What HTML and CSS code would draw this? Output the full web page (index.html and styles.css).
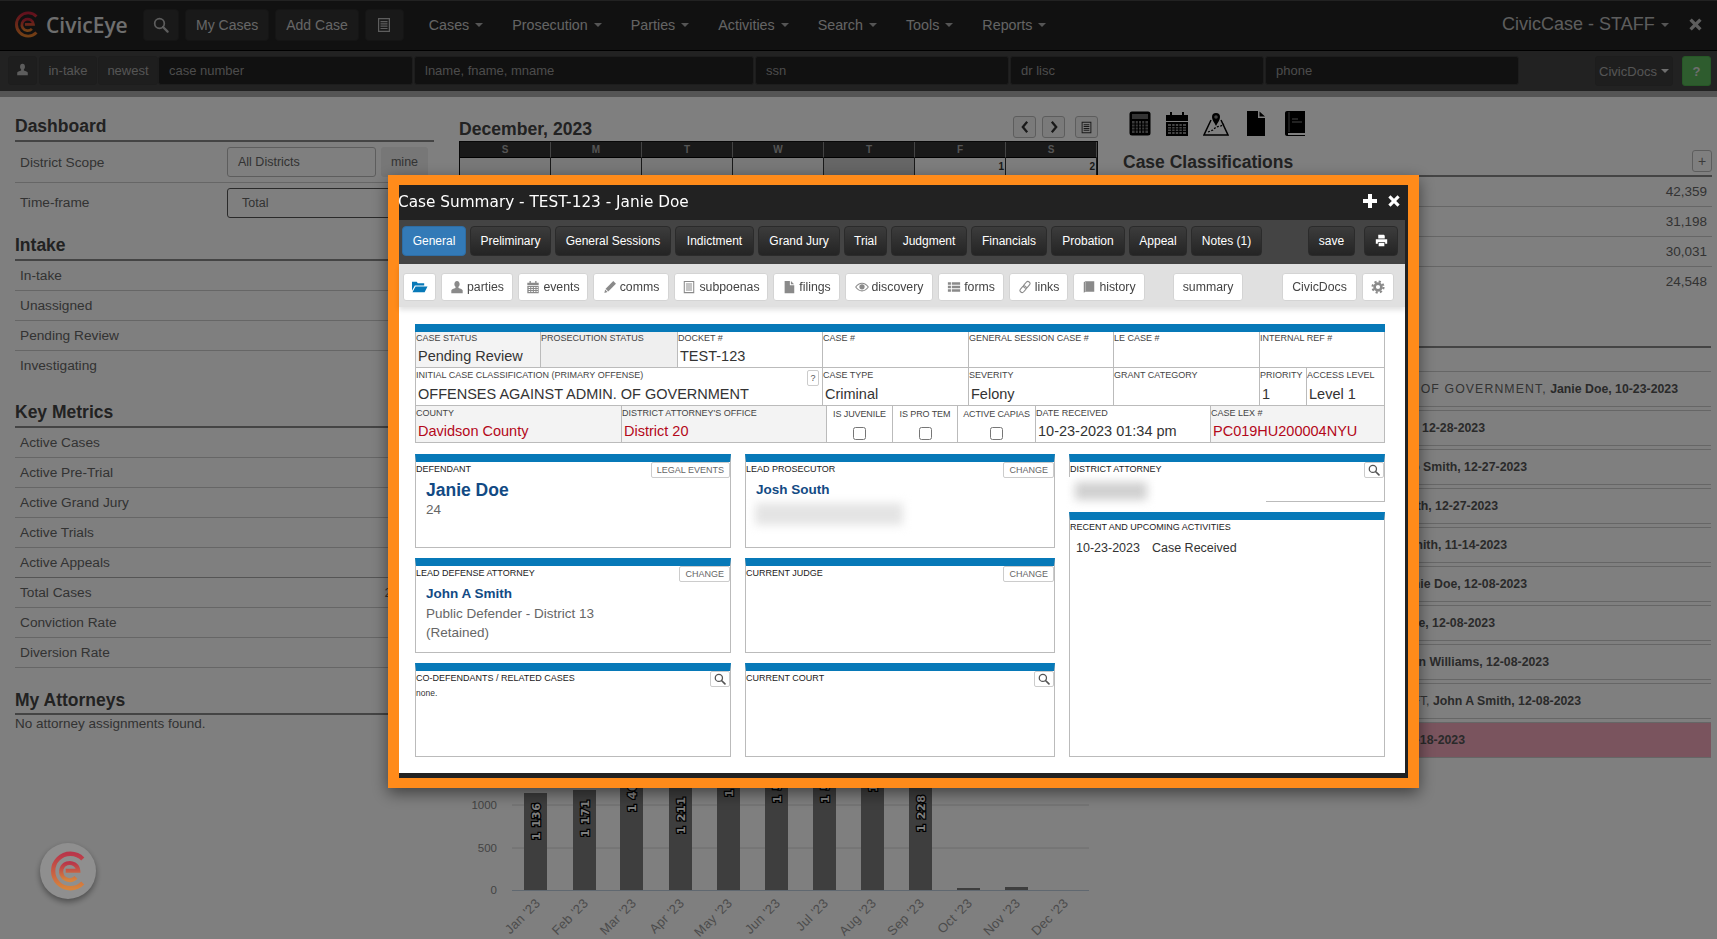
FILE: index.html
```html
<!DOCTYPE html>
<html lang="en">
<head>
<meta charset="utf-8">
<title>CivicEye - Case Summary</title>
<link rel="stylesheet" href="styles.css">
</head>
<body>
<svg class="defs" aria-hidden="true">
  <defs>
    <linearGradient id="brand" x1="0" y1="0" x2="0" y2="1"><stop offset="0" stop-color="#c4203a"/><stop offset="1" stop-color="#e8822a"/></linearGradient>
    <symbol id="i-logo" viewBox="0 0 22 26"><path d="M20.6 5.200A11.200 11.200 0 1 0 20.600 20.800" fill="none" stroke="url(#brand)" stroke-width="2.800"/><path d="M9.500 12.800h8.200A5.600 5.600 0 1 0 16.200 17.200" fill="none" stroke="url(#brand)" stroke-width="2.600"/></symbol>
    <symbol id="i-search" viewBox="0 0 16 16"><circle cx="6.500" cy="6.500" r="4.800" fill="none" stroke="currentColor" stroke-width="1.700"/><path d="M10 10l4.600 4.600" stroke="currentColor" stroke-width="2.200" stroke-linecap="round"/></symbol>
    <symbol id="i-user" viewBox="0 0 16 16"><path fill="currentColor" d="M8 1c2 0 3 1.600 3 3.600 0 1.600-.6 2.600-1.300 3.200v1.300c2 .6 4.800 1.300 4.800 3V15h-13v-2.900c0-1.700 2.800-2.400 4.800-3V7.800C5.600 7.200 5 6.200 5 4.600 5 2.600 6 1 8 1z"/></symbol>
    <symbol id="i-list" viewBox="0 0 16 16"><path fill="currentColor" fill-rule="evenodd" d="M2 1h12v14H2zM3.200 2.200v11.600h9.600V2.200z"/><path fill="currentColor" d="M4.500 4h7v1.200h-7zM4.500 6.300h7v1.200h-7zM4.500 8.600h7v1.200h-7zM4.500 10.900h7v1.200h-7z"/></symbol>
    <symbol id="i-folder" viewBox="0 0 18 16"><path fill="currentColor" d="M1 3h5l1.200 1.500H14V7H4L1 12.500z"/><path fill="currentColor" d="M4.800 8H17.500l-3 6H1.500z"/></symbol>
    <symbol id="i-cal" viewBox="0 0 16 16"><path fill="currentColor" d="M4 1h1.500v2H10.500V1H12v2h2.500v2.800h-13V3H4z"/><path fill="currentColor" fill-rule="evenodd" d="M1.500 6.500h13V15h-13zM3 8v1.200h1.800V8zm3 0v1.200h1.800V8zm3 0v1.200h1.800V8zm3 0v1.200h1.500V8zM3 10.300v1.200h1.800v-1.200zm3 0v1.200h1.800v-1.200zm3 0v1.200h1.800v-1.200zm3 0v1.200h1.500v-1.200zM3 12.600v1.200h1.800v-1.200zm3 0v1.200h1.800v-1.200zm3 0v1.200h1.800v-1.200zm3 0v1.200h1.500v-1.200z"/></symbol>
    <symbol id="i-pencil" viewBox="0 0 16 16"><path fill="currentColor" d="M11.800 1.200l3 3-8.800 8.800-3-3z"/><path fill="currentColor" d="M2.400 10.800l2.800 2.800-3.600 1.200z"/></symbol>
    <symbol id="i-file" viewBox="0 0 16 16"><path fill="currentColor" d="M3 1h6v5h5v9H3zM10.200 1.200l3.600 3.700h-3.600z"/></symbol>
    <symbol id="i-eye" viewBox="0 0 16 16"><path fill="none" stroke="currentColor" stroke-width="1.200" d="M.8 8C3 4.800 5.500 3.600 8 3.600s5 1.200 7.200 4.400c-2.200 3.200-4.700 4.400-7.200 4.400S3 11.200.8 8z"/><circle cx="8" cy="7.800" r="3" fill="currentColor"/></symbol>
    <symbol id="i-th" viewBox="0 0 16 16"><path fill="currentColor" d="M1 2.500h3.500v3H1zM5.500 2.500H15v3H5.500zM1 6.500h3.500v3H1zM5.500 6.500H15v3H5.500zM1 10.500h3.500v3H1zM5.500 10.500H15v3H5.500z"/></symbol>
    <symbol id="i-link" viewBox="0 0 16 16"><g fill="none" stroke="currentColor" stroke-width="1.200" transform="rotate(-50 8 8)"><rect x="0.500" y="5.600" width="8.500" height="4.800" rx="2.400"/><rect x="7" y="5.600" width="8.500" height="4.800" rx="2.400"/></g></symbol>
    <symbol id="i-book" viewBox="0 0 16 16"><path fill="currentColor" d="M2 2.500l2-1h10v12H4l-2 1z"/><path fill="#fff" d="M3.600 2.200h.6V13h-.6z" opacity=".6"/></symbol>
    <symbol id="i-cog" viewBox="0 0 16 16"><circle cx="8" cy="8" r="3.900" fill="none" stroke="currentColor" stroke-width="3"/><circle cx="8" cy="8" r="6.300" fill="none" stroke="currentColor" stroke-width="2.400" stroke-dasharray="2.500 2.450"/></symbol>
    <symbol id="i-print" viewBox="0 0 16 16"><path fill="currentColor" d="M4 1h7l1 1v3.500H4zM1 6.500h14V12h-2.500v-2h-9v2H1zM4.500 11h7v4h-7z"/></symbol>
    <symbol id="i-plus" viewBox="0 0 16 16"><path fill="currentColor" d="M6 1h4v5h5v4h-5v5H6v-5H1V6h5z"/></symbol>
    <symbol id="i-x" viewBox="0 0 16 16"><path fill="currentColor" d="M4 1.500L8 5.500l4-4L14.500 4l-4 4 4 4-2.500 2.500-4-4-4 4L1.500 12l4-4-4-4z"/></symbol>
  </defs>
</svg>

<header class="topbar">
  <a class="brand"><svg class="brand-mark"><use href="#i-logo"/></svg><span>CivicEye</span></a>
  <div class="top-btns">
    <button class="top-btn top-icon"><svg class="ic16"><use href="#i-search"/></svg></button>
    <button class="top-btn">My Cases</button>
    <button class="top-btn">Add Case</button>
    <button class="top-btn top-icon wide"><svg class="ic16"><use href="#i-list"/></svg></button>
  </div>
  <nav class="mainnav">
    <a>Cases<i class="caret"></i></a>
    <a>Prosecution<i class="caret"></i></a>
    <a>Parties<i class="caret"></i></a>
    <a>Activities<i class="caret"></i></a>
    <a>Search<i class="caret"></i></a>
    <a>Tools<i class="caret"></i></a>
    <a>Reports<i class="caret"></i></a>
  </nav>
  <div class="appname">CivicCase - STAFF<i class="caret"></i></div>
  <svg class="top-close"><use href="#i-x"/></svg>
</header>

<div class="subbar">
  <button class="sub-btn sub-user"><svg class="ic13"><use href="#i-user"/></svg></button>
  <button class="sub-btn intake">in-take</button>
  <button class="sub-btn newest">newest</button>
  <input class="sub-input f1" placeholder="case number">
  <input class="sub-input f2" placeholder="lname, fname, mname">
  <input class="sub-input f3" placeholder="ssn">
  <input class="sub-input f3" placeholder="dr lisc">
  <input class="sub-input f3" placeholder="phone">
  <button class="sub-btn docs">CivicDocs<i class="caret light"></i></button>
  <button class="help">?</button>
</div>
<div class="strip"></div>

<main class="page">
  <section class="col-left">
    <h2 class="sec first">Dashboard</h2>
    <div class="scope-row">
      <span>District Scope</span>
      <div class="scope-box">All Districts</div>
      <div class="scope-btn">mine</div>
    </div>
    <div class="scope-row second">
      <span>Time-frame</span>
      <div class="scope-box active">Total</div>
    </div>
    <h2 class="sec">Intake</h2>
    <ul class="stat-list">
      <li>In-take</li>
      <li>Unassigned</li>
      <li>Pending Review</li>
      <li class="noline">Investigating</li>
    </ul>
    <h2 class="sec key">Key Metrics</h2>
    <ul class="stat-list">
      <li>Active Cases</li>
      <li>Active Pre-Trial</li>
      <li>Active Grand Jury</li>
      <li>Active Trials</li>
      <li class="dark">Active Appeals</li>
      <li><span>Total Cases</span><span class="partial">2</span></li>
      <li>Conviction Rate</li>
      <li>Diversion Rate</li>
    </ul>
    <h2 class="sec att">My Attorneys</h2>
    <p class="none-found">No attorney assignments found.</p>
  </section>

  <section class="col-mid">
    <div class="cal-head">
      <h2>December, 2023</h2>
      <div class="cal-nav">
        <button class="cal-btn"><svg viewBox="0 0 10 16"><path d="M7.500 2L2.500 8l5 6" fill="none" stroke="currentColor" stroke-width="2.600"/></svg></button>
        <button class="cal-btn"><svg viewBox="0 0 10 16"><path d="M2.500 2l5 6-5 6" fill="none" stroke="currentColor" stroke-width="2.600"/></svg></button>
        <button class="cal-btn c3"><svg class="ic13"><use href="#i-list"/></svg></button>
      </div>
    </div>
    <div class="cal">
      <b>S</b><b>M</b><b>T</b><b>W</b><b>T</b><b>F</b><b>S</b>
      <span></span><span></span><span></span><span></span><span class="today"></span><span class="cur">1</span><span class="cur">2</span>
    </div>
    <svg class="chart" viewBox="0 0 640 239" role="img">
      <g class="grid"><path d="M53 105H630M53 148H630"/></g>
      <path class="base" d="M53 190.500H630"/>
      <g class="yaxis"><text x="38" y="109">1000</text><text x="38" y="152">500</text><text x="38" y="194">0</text></g>
      <g class="bars">
        <rect x="65" y="93" width="23" height="97"/><rect x="114" y="90" width="23" height="100"/><rect x="161" y="65" width="23" height="125"/><rect x="210" y="87" width="23" height="103"/><rect x="258" y="50" width="23" height="140"/><rect x="306" y="56" width="23" height="134"/><rect x="354" y="56" width="23" height="134"/><rect x="402" y="45" width="23" height="145"/><rect x="450" y="85" width="23" height="105"/><rect x="498" y="188" width="23" height="2"/><rect x="546" y="187" width="23" height="3"/>
      </g>
      <g class="barlabels">
        <text transform="translate(81 140) rotate(-90)">1 136</text>
        <text transform="translate(130 137) rotate(-90)">1 171</text>
        <text transform="translate(177 112) rotate(-90)">1 468</text>
        <text transform="translate(226 134) rotate(-90)">1 211</text>
        <text transform="translate(274 97) rotate(-90)">1 647</text>
        <text transform="translate(322 103) rotate(-90)">1 576</text>
        <text transform="translate(370 103) rotate(-90)">1 577</text>
        <text transform="translate(418 92) rotate(-90)">1 706</text>
        <text transform="translate(466 132) rotate(-90)">1 228</text>
      </g>
      <g class="xaxis">
        <text transform="translate(82 204) rotate(-45)">Jan '23</text>
        <text transform="translate(130 204) rotate(-45)">Feb '23</text>
        <text transform="translate(178 204) rotate(-45)">Mar '23</text>
        <text transform="translate(226 204) rotate(-45)">Apr '23</text>
        <text transform="translate(274 204) rotate(-45)">May '23</text>
        <text transform="translate(322 204) rotate(-45)">Jun '23</text>
        <text transform="translate(370 204) rotate(-45)">Jul '23</text>
        <text transform="translate(418 204) rotate(-45)">Aug '23</text>
        <text transform="translate(466 204) rotate(-45)">Sep '23</text>
        <text transform="translate(514 204) rotate(-45)">Oct '23</text>
        <text transform="translate(562 204) rotate(-45)">Nov '23</text>
        <text transform="translate(610 204) rotate(-45)">Dec '23</text>
      </g>
    </svg>
  </section>

  <section class="col-right">
    <div class="tool-icons">
      <svg viewBox="0 0 22 25" class="t22"><rect x="0.500" y="0.500" width="21" height="24" rx="2.500" fill="#000"/><rect x="3" y="3" width="16" height="5" fill="#666"/><path d="M3 10h16v12H3z" fill="#777"/><path d="M6.200 10v12M9.400 10v12M12.600 10v12M15.800 10v12M3 13h16M3 16h16M3 19h16" stroke="#000" stroke-width="1.200"/></svg>
      <svg viewBox="0 0 22 25" class="t22"><path d="M0 4h4V1h2v3h10V1h2v3h4v6H0z" fill="#000"/><rect y="11" width="22" height="14" fill="#000"/><path d="M2 13h18v10H2z" fill="#888"/><path d="M5.600 13v10M9.200 13v10M12.800 13v10M16.400 13v10M2 15.500h18M2 18h18M2 20.500h18" stroke="#000" stroke-width="1.200"/></svg>
      <svg viewBox="0 0 26 25" class="t26"><path d="M8 9L1 24h24L18 9" fill="none" stroke="#000" stroke-width="1.500"/><path d="M13 15c-2-4-4-6-4-9a4 4 0 0 1 8 0c0 3-2 5-4 9z" fill="#000"/><circle cx="13" cy="6" r="1.800" fill="#888"/><path d="M5 21l5-2 3-3 5-1 3-2" fill="none" stroke="#000" stroke-width="1.300" stroke-dasharray="2 1.500"/></svg>
      <svg viewBox="0 0 18 25" class="t18"><path d="M0 0h11v7h7v18H0zM12.500 0.500L18 5.500h-5.500z" fill="#000"/></svg>
      <svg viewBox="0 0 20 25" class="t20"><path d="M2 0h18v22H3v2h17v1H2c-1 0-2-.8-2-2V2C0 .8 1 0 2 0z" fill="#000"/><path d="M7 8h6M7 11h10" stroke="#888" stroke-width="1.200"/><path d="M4 1v20" stroke="#888" stroke-width=".8"/></svg>
    </div>
    <div class="class-head"><h2>Case Classifications</h2><button class="plus">+</button></div>
    <ul class="class-list">
      <li>42,359</li>
      <li>31,198</li>
      <li>30,031</li>
      <li>24,548</li>
    </ul>
    <div class="recent">
      <div class="rc e1"><span class="caps">OF GOVERNMENT,</span> <b>Janie Doe, 10-23-2023</b></div>
      <div class="rc e2"><b>12-28-2023</b></div>
      <div class="rc e3"><b>Jo Smith, 12-27-2023</b></div>
      <div class="rc e4"><b>Smith, 12-27-2023</b></div>
      <div class="rc e5"><b>Smith, 11-14-2023</b></div>
      <div class="rc e6"><b>Janie Doe, 12-08-2023</b></div>
      <div class="rc e7"><b>Doe, 12-08-2023</b></div>
      <div class="rc e8"><b>Susan Williams, 12-08-2023</b></div>
      <div class="rc e9">THEFT, <b>John A Smith, 12-08-2023</b></div>
      <div class="rc e10 alert"><b>12-18-2023</b></div>
    </div>
  </section>
</main>

<button class="float-logo"><svg><use href="#i-logo"/></svg></button>

<div class="backdrop"></div>

<div class="modal">
  <div class="modal-title">
    <h1>Case Summary - TEST-123 - Janie Doe</h1>
    <div class="modal-actions"><svg class="m-plus"><use href="#i-plus"/></svg><svg class="m-x"><use href="#i-x"/></svg></div>
  </div>
  <div class="tabs">
    <button class="tab on">General</button>
    <button class="tab">Preliminary</button>
    <button class="tab">General Sessions</button>
    <button class="tab">Indictment</button>
    <button class="tab">Grand Jury</button>
    <button class="tab">Trial</button>
    <button class="tab">Judgment</button>
    <button class="tab">Financials</button>
    <button class="tab">Probation</button>
    <button class="tab">Appeal</button>
    <button class="tab">Notes (1)</button>
    <button class="tab save">save</button>
    <button class="tab print"><svg class="ic13"><use href="#i-print"/></svg></button>
  </div>
  <div class="tools">
    <button class="tool"><svg class="ic-f"><use href="#i-folder"/></svg></button>
    <button class="tool"><svg><use href="#i-user"/></svg>parties</button>
    <button class="tool"><svg><use href="#i-cal"/></svg>events</button>
    <button class="tool"><svg><use href="#i-pencil"/></svg>comms</button>
    <button class="tool"><svg><use href="#i-list"/></svg>subpoenas</button>
    <button class="tool"><svg><use href="#i-file"/></svg>filings</button>
    <button class="tool"><svg><use href="#i-eye"/></svg>discovery</button>
    <button class="tool"><svg><use href="#i-th"/></svg>forms</button>
    <button class="tool"><svg><use href="#i-link"/></svg>links</button>
    <button class="tool"><svg><use href="#i-book"/></svg>history</button>
    <button class="tool summary">summary</button>
    <button class="tool docs-btn">CivicDocs</button>
    <button class="tool gear"><svg><use href="#i-cog"/></svg></button>
  </div>
  <div class="content">
    <div class="facts">
      <div class="frow r1">
        <div class="cell gray"><label>CASE STATUS</label><span class="v">Pending Review</span></div>
        <div class="cell gray2"><label>PROSECUTION STATUS</label></div>
        <div class="cell"><label>DOCKET #</label><span class="v">TEST-123</span></div>
        <div class="cell"><label>CASE #</label></div>
        <div class="cell"><label>GENERAL SESSION CASE #</label></div>
        <div class="cell"><label>LE CASE #</label></div>
        <div class="cell"><label>INTERNAL REF #</label></div>
      </div>
      <div class="frow r2">
        <div class="cell"><label>INITIAL CASE CLASSIFICATION (PRIMARY OFFENSE)</label><button class="q">?</button><span class="v">OFFENSES AGAINST ADMIN. OF GOVERNMENT</span></div>
        <div class="cell"><label>CASE TYPE</label><span class="v">Criminal</span></div>
        <div class="cell"><label>SEVERITY</label><span class="v">Felony</span></div>
        <div class="cell"><label>GRANT CATEGORY</label></div>
        <div class="cell"><label>PRIORITY</label><span class="v">1</span></div>
        <div class="cell"><label>ACCESS LEVEL</label><span class="v">Level 1</span></div>
      </div>
      <div class="frow r3">
        <div class="cell gray"><label>COUNTY</label><span class="v red">Davidson County</span></div>
        <div class="cell gray"><label>DISTRICT ATTORNEY'S OFFICE</label><span class="v red">District 20</span></div>
        <div class="cell chk"><label>IS JUVENILE</label><input type="checkbox"></div>
        <div class="cell chk"><label>IS PRO TEM</label><input type="checkbox"></div>
        <div class="cell chk"><label>ACTIVE CAPIAS</label><input type="checkbox"></div>
        <div class="cell"><label>DATE RECEIVED</label><span class="v">10-23-2023 01:34 pm</span></div>
        <div class="cell gray"><label>CASE LEX #</label><span class="v red">PC019HU200004NYU</span></div>
      </div>
    </div>

    <div class="cards">
      <div class="card">
        <div class="card-head"><span>DEFENDANT</span><button class="mini">LEGAL EVENTS</button></div>
        <a class="name big">Janie Doe</a>
        <div class="sub">24</div>
      </div>
      <div class="card">
        <div class="card-head"><span>LEAD PROSECUTOR</span><button class="mini">CHANGE</button></div>
        <a class="name">Josh South</a>
        <div class="blur-a"></div>
      </div>
      <div class="stack">
        <div class="card da">
          <div class="card-head"><span>DISTRICT ATTORNEY</span><button class="mini icon"><svg><use href="#i-search"/></svg></button></div>
          <div class="blur-b"><i></i></div>
        </div>
        <div class="card act">
          <div class="card-head"><span>RECENT AND UPCOMING ACTIVITIES</span></div>
          <div class="activity"><span>10-23-2023</span><span>Case Received</span></div>
        </div>
      </div>
      <div class="card">
        <div class="card-head"><span>LEAD DEFENSE ATTORNEY</span><button class="mini">CHANGE</button></div>
        <a class="name">John A Smith</a>
        <div class="sub">Public Defender - District 13</div>
        <div class="sub">(Retained)</div>
      </div>
      <div class="card">
        <div class="card-head"><span>CURRENT JUDGE</span><button class="mini">CHANGE</button></div>
      </div>
      <div class="card">
        <div class="card-head"><span>CO-DEFENDANTS / RELATED CASES</span><button class="mini icon"><svg><use href="#i-search"/></svg></button></div>
        <div class="none">none.</div>
      </div>
      <div class="card">
        <div class="card-head"><span>CURRENT COURT</span><button class="mini icon"><svg><use href="#i-search"/></svg></button></div>
      </div>
    </div>
  </div>
</div>
</body>
</html>
```

FILE: styles.css
```css
* { box-sizing: border-box; }
html, body { margin: 0; height: 939px; overflow: hidden; }
body { background: #fff; font-family: "Liberation Sans", Arial, sans-serif; color: #666; font-size: 13.500px; }
button { font-family: inherit; cursor: pointer; }
ul { list-style: none; margin: 0; padding: 0; }
h1, h2, p { margin: 0; }
.defs { display: block; width: 0; height: 0; overflow: hidden; }
.ic16 { width: 16px; height: 16px; }
.ic13 { width: 13px; height: 13px; }

/* top bar */
.topbar { height: 51px; background: #232323; border-top: 1px solid #444; border-bottom: 1px solid #000; display: flex; align-items: center; padding: 0 0 2px 15px; position: relative; }
.brand { display: flex; align-items: center; width: 128px; color: #ddd; font-family: "Open Sans", sans-serif; font-weight: 600; font-size: 21px; gap: 8px; }
.brand-mark { width: 23px; height: 27px; flex: none; }
.top-btns { display: flex; gap: 6px; }
.top-btn { height: 32px; padding: 0 10px; background: #333; border: 1px solid #2b2b2b; border-radius: 4px; color: #ccc; font-size: 14px; display: flex; align-items: center; justify-content: center; }
.top-icon { width: 36px; padding: 0; color: #bbb; }
.top-icon.wide { width: 39px; }
.mainnav { display: flex; margin-left: 25px; gap: 29px; }
.mainnav a { color: #c8c8c8; font-size: 14.300px; display: flex; align-items: center; }
.caret { display: inline-block; width: 0; height: 0; margin-left: 6px; border-left: 4px solid transparent; border-right: 4px solid transparent; border-top: 4px solid #aaa; }
.caret.light { border-top-color: #ddd; margin-left: 4px; }
.appname { position: absolute; left: 1502px; top: 13px; color: #bbb; font-size: 18px; display: flex; align-items: center; }
.top-close { position: absolute; left: 1688px; top: 16px; width: 15px; height: 15px; color: #bbb; }

/* sub bar */
.subbar { height: 40px; background: #444; display: flex; align-items: flex-start; padding: 5px 0 0 8px; }
.sub-btn { height: 29px; background: #3d3d3d; border: 1px solid #3a3a3a; border-radius: 3px; color: #aaa; font-size: 13px; padding: 0; }
.sub-user { width: 29px; margin-right: 2px; color: #bbb; }
.intake { width: 58px; margin-right: 1px; }
.newest { width: 60px; }
.sub-input { height: 29px; background: #222; border: 1px solid #3a3a3a; border-radius: 3px; padding: 0 10px; font: 13px "Liberation Sans", Arial, sans-serif; color: #aaa; margin-right: 1px; }
.sub-input::placeholder { color: #999; opacity: 1; }
.f1 { width: 255px; }
.f2 { width: 340px; }
.f3 { width: 254px; }
.docs { width: 78px; margin-left: 75px; margin-right: 9px; display: flex; align-items: center; justify-content: center; height: 30px; }
.help { width: 29px; height: 30px; background: #5cb85c; border: 1px solid #4cae4c; border-radius: 3px; color: #ddd; font-weight: 700; font-size: 13px; padding: 0; }
.strip { height: 6px; background: #aaa; }

/* page grid */
.page { display: grid; grid-template-columns: 419px 639px 589px; column-gap: 25px; padding-left: 15px; align-items: start; }

/* left */
.sec { font-size: 17.500px; line-height: 20px; color: #444; font-weight: 700; padding-bottom: 4px; border-bottom: 2px solid #888; }
.sec.first { margin-top: 19px; }
.scope-row { height: 41px; border-bottom: 1px solid #ccc; display: flex; align-items: center; padding-left: 5px; font-size: 13.700px; }
.scope-row > span { width: 207px; }
.scope-row.second { border-bottom: 0; height: 39px; margin-bottom: 13px; }
.scope-box { width: 149px; height: 30px; line-height: 28px; border: 1px solid #bbb; border-radius: 3px; padding-left: 10px; font-size: 12.500px; }
.scope-box.active { width: 180px; border-color: #555; padding-left: 14px; }
.scope-btn { width: 47px; height: 30px; line-height: 30px; margin-left: 5px; text-align: center; background: #eee; border-radius: 3px; font-size: 12.500px; }
.stat-list li { height: 30px; line-height: 29px; padding: 0 5px; border-bottom: 1px solid #ccc; font-size: 13.700px; display: flex; justify-content: space-between; }
.stat-list li.noline { border-bottom: 0; }
.stat-list li.dark { border-bottom-color: #aaa; }
.partial { margin-right: 37px; }
.sec.key { margin-top: 21px; }
.sec.att { margin-top: 22px; padding-bottom: 3px; }
.none-found { line-height: 18px; font-size: 13.500px; }

/* middle */
.cal-head { display: flex; justify-content: space-between; height: 44px; padding-top: 19px; }
.cal-head h2 { font-size: 17.600px; line-height: 26px; color: #444; }
.cal-nav { display: flex; gap: 6px; align-items: flex-start; }
.cal-btn { width: 23px; height: 22px; background: #f5f5f5; border: 1px solid #bbb; border-radius: 3px; padding: 0; color: #333; display: flex; align-items: center; justify-content: center; }
.cal-btn svg { width: 10px; height: 14px; }
.cal-btn .ic13 { width: 13px; height: 13px; }
.cal-btn.c3 { margin-left: 4px; }
.cal { display: grid; grid-template-columns: repeat(7, 1fr); grid-template-rows: 16px 540px; border: 1px solid #111; }
.cal b { background: #333; color: #aaa; font-size: 10px; line-height: 15px; text-align: center; border-right: 1px solid #888; border-bottom: 1px solid #000; }
.cal span { background: #f0f0f0; border-right: 1px solid #333; text-align: right; font-weight: 700; font-size: 10px; padding-right: 1px; line-height: 18px; color: #333; }
.cal span.today { background: #ccc; }
.cal span.cur { background: #fafafa; }
.chart { display: block; width: 640px; height: 239px; margin-top: 1px; }
.grid path { stroke: #d8d8d8; stroke-width: 1; fill: none; }
.base { stroke: #c0d0e0; stroke-width: 1; fill: none; }
.yaxis text { font-size: 11.500px; fill: #888; text-anchor: end; font-family: "Liberation Sans", sans-serif; }
.bars rect { fill: #7c7c7c; }
.barlabels text { font: 700 11px "DejaVu Sans", sans-serif; fill: #fff; stroke: #000; stroke-width: 2.500px; paint-order: stroke; letter-spacing: .6px; }
.xaxis text { font-size: 13px; letter-spacing: .3px; fill: #999; text-anchor: end; font-family: "Liberation Sans", sans-serif; }

/* right */
.tool-icons { display: flex; align-items: center; height: 25px; margin-top: 14px; padding-left: 6px; }
.t22 { width: 22px; height: 25px; margin-right: 15px; }
.t26 { width: 26px; height: 25px; margin-right: 18px; }
.t18 { width: 18px; height: 25px; margin-right: 20px; }
.t20 { width: 20px; height: 25px; }
.class-head { display: flex; justify-content: space-between; align-items: flex-end; height: 41px; padding-bottom: 1px; border-bottom: 2px solid #888; }
.class-head h2 { font-size: 17.500px; line-height: 24px; color: #444; }
.plus { width: 20px; height: 22px; margin-bottom: 2px; background: #fff; border: 1px solid #bbb; border-radius: 3px; font-size: 14px; padding: 0; color: #777; }
.class-list li { height: 30px; line-height: 30px; padding: 0 5px; border-bottom: 1px solid #ccc; text-align: right; font-size: 13.500px; }
.class-list li:last-child { border-bottom: 0; }
.recent { margin-top: 49px; width: 588px; border-top: 2px solid #888; padding-top: 23px; }
.rc { height: 36px; line-height: 34px; margin-bottom: 3px; border-top: 1px solid #ccc; border-bottom: 1px solid #ccc; text-align: right; font-size: 12.300px; white-space: nowrap; color: #666; overflow: hidden; }
.rc b { color: #555; }
.rc .caps { letter-spacing: 1.100px; }
.rc.alert { background: #f4a9bd; }
.e1 { padding-right: 33px; }
.e2 { padding-right: 226px; }
.e3 { padding-right: 184px; }
.e4 { padding-right: 213px; }
.e5 { padding-right: 204px; }
.e6 { padding-right: 184px; }
.e7 { padding-right: 216px; }
.e8 { padding-right: 162px; }
.e9 { padding-right: 130px; }
.e10 { padding-right: 246px; }

.float-logo { position: fixed; left: 40px; top: 843px; width: 56px; height: 56px; border-radius: 50%; background: #8f8f8f; border: 0; box-shadow: 0 3px 6px rgba(0,0,0,.4); display: flex; align-items: center; justify-content: center; z-index: 20; padding: 0; }
.float-logo svg { width: 34px; height: 40px; opacity: .8; }

/* backdrop + modal */
.backdrop { position: fixed; inset: 0; background: rgba(0,0,0,.5); z-index: 10; }
.modal { position: fixed; left: 388px; top: 174.500px; width: 1031px; height: 613.500px; border: solid #ff8b1a; border-width: 10.500px 11px 10px; background: #222; padding: 0 3px 5px 0; display: flex; flex-direction: column; box-shadow: 0 5px 15px rgba(0,0,0,.5); z-index: 15; }
.modal-title { height: 35px; flex: none; display: flex; justify-content: space-between; align-items: center; }
.modal-title h1 { font: 400 15.300px "DejaVu Sans", sans-serif; color: #fff; margin-left: -1px; }
.modal-actions { display: flex; align-items: center; gap: 9px; padding-right: 4px; margin-top: -3px; }
.m-plus { width: 16px; height: 16px; color: #fff; }
.m-x { width: 14px; height: 14px; color: #fff; }

.tabs { height: 44px; flex: none; background: #444; display: grid; grid-template-columns: 64px 81px 116px 79px 82px 43px 76px 76px 74px 58px 71px 1fr 47px 39px; column-gap: 4px; align-items: start; padding: 6px 7px 0 3px; }
.tab { height: 30px; padding: 0; background: linear-gradient(#3c3c3c, #242424); border: 1px solid #2b2b2b; border-radius: 4px; color: #fff; font-size: 12px; white-space: nowrap; }
.tab.on { background: #337ab7; border-color: #2e6da4; }
.tab.save { grid-column: 13; }
.tab.print { grid-column: 14; margin-left: 5px; display: flex; align-items: center; justify-content: center; }
.tools { height: 43px; flex: none; background: #e0e0e0; display: grid; grid-template-columns: 33px 72px 70px 76px 94px 67px 88px 66px 59px 72px 18px 70px 29px 75px 32px; column-gap: 5px; align-items: start; padding: 9px 0 0 4px; box-shadow: 0 3px 5px rgba(0,0,0,.12); position: relative; z-index: 1; }
.tool { height: 28px; padding: 0; background: #fff; border: 1px solid #d4d4d4; border-radius: 3px; font-size: 12.300px; color: #444; display: flex; align-items: center; justify-content: center; gap: 3px; white-space: nowrap; }
.tool svg { width: 14px; height: 14px; color: #8a8a8a; flex: none; }
.tool .ic-f { width: 17px; height: 15px; color: #0779b8; }
.tool.summary { grid-column: 12; }
.tool.docs-btn { grid-column: 14; }
.tool.gear { grid-column: 15; }

.content { flex: 1; background: #fff; padding: 17px 20px 0 16px; min-height: 0; }
.facts { width: 970px; border-top: 8px solid #0779b8; }
.frow { display: grid; border: 1px solid #bbb; border-top: 0; }
.r1 { height: 36px; grid-template-columns: 125px 137px 145px 146px 145px 146px 1fr; }
.r2 { height: 38px; grid-template-columns: 407px 146px 145px 146px 47px 1fr; }
.r3 { height: 37px; grid-template-columns: 206px 205px 66px 65px 78px 175px 1fr; }
.cell { border-right: 1px solid #bbb; display: flex; flex-direction: column; position: relative; min-width: 0; }
.cell:last-child { border-right: 0; }
.cell label { font-size: 9px; line-height: 12px; color: #444; white-space: nowrap; }
.r2 .cell label, .r3 .cell label { padding-top: 1px; line-height: 12px; }
.v { margin-top: auto; font-size: 14.500px; line-height: 20px; color: #333; padding: 0 0 1px 2px; white-space: nowrap; }
.v.red { color: #b3081a; }
.gray { background: #f3f3f3; }
.gray2 { background: #efefef; }
.q { position: absolute; right: 3px; top: 2px; width: 12px; height: 16px; padding: 0; background: #fff; border: 1px solid #ccc; border-radius: 2px; font-size: 9px; color: #555; }
.chk { align-items: center; }
.r3 .chk label { padding: 2px 0 0; white-space: nowrap; letter-spacing: -.1px; }
.chk input { margin: auto 0 2px; width: 13px; height: 13px; }

.cards { margin-top: 11px; display: grid; grid-template-columns: 316px 310px 316px; grid-template-rows: 94px 95px 94px; column-gap: 14px; row-gap: 10px; width: 970px; }
.card { border: 1px solid #bbb; border-top: 8px solid #0779b8; position: relative; min-width: 0; }
.card-head { display: flex; justify-content: space-between; height: 14px; font-size: 9px; line-height: 14px; color: #222; white-space: nowrap; }
.mini { height: 16px; padding: 0 5px; background: #fff; border: 1px solid #ccc; border-radius: 2px; font-size: 9px; color: #666; line-height: 14px; margin-right: 0; }
.mini.icon { width: 20px; padding: 0; display: flex; align-items: center; justify-content: center; }
.mini.icon svg { width: 12px; height: 12px; color: #555; }
.name { display: block; margin: 4px 0 0 10px; font-size: 13.500px; line-height: 20px; font-weight: 700; color: #124a84; }
.name.big { font-size: 17.500px; }
.sub { margin-left: 10px; font-size: 13.500px; line-height: 19px; color: #666; }
.none { font-size: 8.500px; line-height: 12px; margin-top: 2px; color: #333; }
.blur-a { margin: 3px 0 0 9px; width: 148px; height: 22px; background: #e4e4e4; filter: blur(5px); }
.stack { grid-column: 3; grid-row: 1 / span 3; display: flex; flex-direction: column; gap: 10px; min-height: 0; }
.stack .card { min-height: 0; }
.card.da { height: 48px; }
.card.act { flex: 1; }
.blur-b { position: absolute; left: -4px; top: 15px; width: 200px; height: 27px; background: #fff; }
.blur-b i { display: block; margin: 5px 0 0 9px; width: 72px; height: 18px; background: #d0d0d0; filter: blur(5px); }
.activity { display: flex; gap: 12px; margin: 5px 0 0 6px; font-size: 12.500px; line-height: 18px; color: #333; }
```
